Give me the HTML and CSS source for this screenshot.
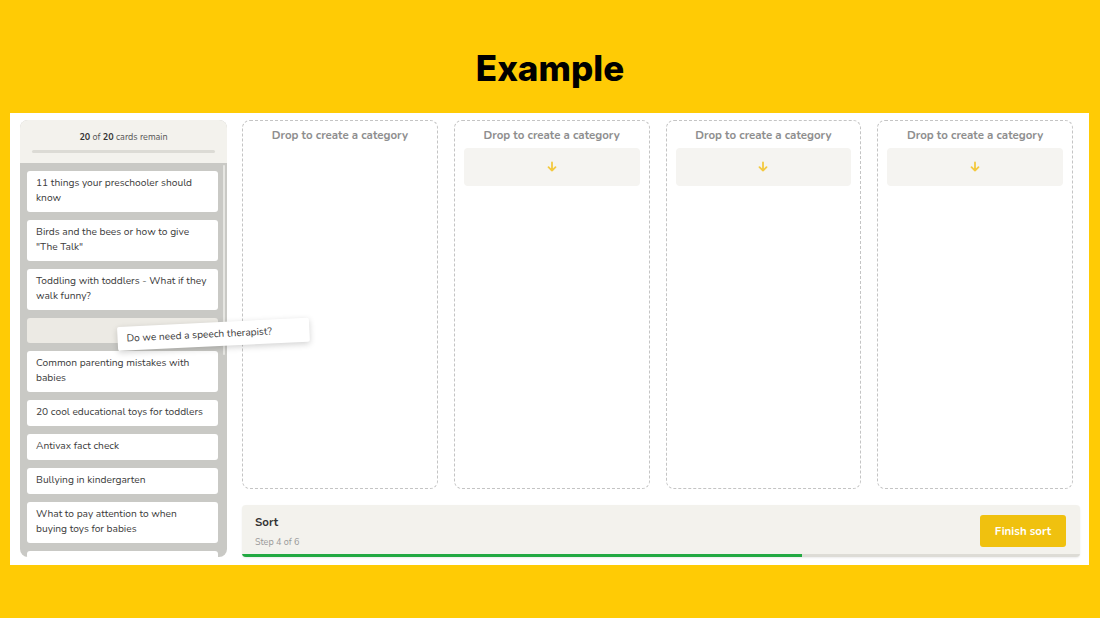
FILE: index.html
```html
<!DOCTYPE html>
<html lang="en">
<head>
    <meta charset="UTF-8">
    <meta name="viewport" content="width=device-width, initial-scale=1.0">
    <title>Card sort example</title>
    <link rel="stylesheet" href="styles.css">
</head>
<body>
    <h1 class="title">Example</h1>

    <div class="panel">
        <!-- Lista de cartões -->
        <div class="sidebar">
            <div class="remain">
                <p><strong>20</strong> of <strong>20</strong> cards remain</p>
                <div class="remain-bar"></div>
            </div>
            <div class="cards">
                <div class="card">11 things your preschooler should know</div>
                <div class="card">Birds and the bees or how to give "The Talk"</div>
                <div class="card">Toddling with toddlers - What if they walk funny?</div>
                <div class="card placeholder"></div>
                <div class="card">Common parenting mistakes with babies</div>
                <div class="card">20 cool educational toys for toddlers</div>
                <div class="card">Antivax fact check</div>
                <div class="card">Bullying in kindergarten</div>
                <div class="card">What to pay attention to when buying toys for babies</div>
                <div class="card empty"></div>
                <div class="scroll-thumb"></div>
            </div>
        </div>

        <div class="dragging">Do we need a speech therapist?</div>

        <!-- Categorias -->
        <div class="main">
            <div class="columns">
                <div class="column">
                    <h4>Drop to create a category</h4>
                </div>
                <div class="column">
                    <h4>Drop to create a category</h4>
                    <div class="dropzone">
                        <svg width="12" height="12" viewBox="0 0 12 12"><path d="M6 1.5v8M2.5 6.2L6 9.6l3.5-3.4" fill="none" stroke="#f3c93f" stroke-width="1.8" stroke-linecap="round" stroke-linejoin="round"/></svg>
                    </div>
                </div>
                <div class="column">
                    <h4>Drop to create a category</h4>
                    <div class="dropzone">
                        <svg width="12" height="12" viewBox="0 0 12 12"><path d="M6 1.5v8M2.5 6.2L6 9.6l3.5-3.4" fill="none" stroke="#f3c93f" stroke-width="1.8" stroke-linecap="round" stroke-linejoin="round"/></svg>
                    </div>
                </div>
                <div class="column">
                    <h4>Drop to create a category</h4>
                    <div class="dropzone">
                        <svg width="12" height="12" viewBox="0 0 12 12"><path d="M6 1.5v8M2.5 6.2L6 9.6l3.5-3.4" fill="none" stroke="#f3c93f" stroke-width="1.8" stroke-linecap="round" stroke-linejoin="round"/></svg>
                    </div>
                </div>
            </div>

            <div class="footer">
                <div class="step">
                    <h3>Sort</h3>
                    <p>Step 4 of 6</p>
                </div>
                <button class="finish">Finish sort</button>
                <div class="progress"><div class="progress-fill"></div></div>
            </div>
        </div>
    </div>
</body>
</html>
```

FILE: styles.css
```css
/* Geral */
body {
    margin: 0;
    background-color: #ffcb05;
    font-family: 'Nunito', 'Lato', sans-serif;
    height: 618px;
    overflow: hidden;
}

.title {
    margin: 0;
    height: 113px;
    display: flex;
    align-items: center;
    justify-content: center;
    padding-top: 22px;
    box-sizing: border-box;
    font-family: 'Inter', sans-serif;
    font-weight: 800;
    font-size: 35px;
    color: #000;
}

.panel {
    position: relative;
    margin: 0 11px 0 10px;
    height: 452px;
    background-color: #fff;
    padding: 7px 9px 8px 10px;
    box-sizing: border-box;
    display: flex;
    gap: 15px;
}

/* Barra lateral */
.sidebar {
    width: 207px;
    flex-shrink: 0;
    border-radius: 8px;
    overflow: hidden;
    display: flex;
    flex-direction: column;
    background-color: #c9c9c5;
}

.remain {
    background-color: #f3f2ed;
    height: 43px;
    padding: 11px 12px 0;
    box-sizing: border-box;
}

.remain p {
    margin: 0;
    font-size: 9px;
    color: #555;
    text-align: center;
}

.remain p strong {
    color: #333;
}

.remain-bar {
    height: 3px;
    background-color: #dcdbd5;
    margin-top: 7px;
    border-radius: 2px;
}

.cards {
    position: relative;
    flex: 1;
    overflow: hidden;
    padding: 8px 9px 0 7px;
    display: flex;
    flex-direction: column;
    gap: 8px;
}

.card {
    background-color: #fff;
    border-radius: 3px;
    padding: 5px 9px 6px;
    font-size: 10.2px;
    line-height: 15px;
    color: #3a3a3a;
    flex-shrink: 0;
}

.card.placeholder {
    background-color: #eceae4;
    height: 25px;
    padding: 0;
}

.card.empty {
    height: 30px;
    padding: 0;
}

.scroll-thumb {
    position: absolute;
    right: 2px;
    top: 2px;
    width: 2px;
    height: 190px;
    background-color: #e6e6e2;
    border-radius: 1px;
}

/* Cartão sendo arrastado */
.dragging {
    position: absolute;
    left: 107px;
    top: 214px;
    width: 192px;
    height: 24px;
    box-sizing: border-box;
    padding: 5px 9px;
    background-color: #fff;
    font-size: 10.2px;
    line-height: 14px;
    color: #3a3a3a;
    transform: rotate(-2.8deg);
    transform-origin: left top;
    box-shadow: 0 2px 6px rgba(0, 0, 0, 0.18);
    border-radius: 2px;
}

/* Área principal */
.main {
    flex: 1;
    display: flex;
    flex-direction: column;
    gap: 16px;
}

.columns {
    height: 369px;
    display: flex;
    gap: 16px;
    padding-right: 7px;
}

.column {
    flex: 1;
    border: 1px dashed #c4c4c4;
    border-radius: 8px;
    padding: 6px 9px;
}

.column h4 {
    margin: 0 0 5px;
    text-align: center;
    font-size: 11.5px;
    font-weight: 700;
    color: #8e8e8e;
}

.dropzone {
    height: 38px;
    background-color: #f5f4f1;
    border-radius: 4px;
    display: flex;
    align-items: center;
    justify-content: center;
}

/* Rodapé com etapa */
.footer {
    position: relative;
    height: 52px;
    background-color: #f3f2ed;
    border-radius: 4px;
    box-shadow: 0 1px 2px rgba(0, 0, 0, 0.08);
    display: flex;
    align-items: center;
    justify-content: space-between;
    padding: 0 14px 0 13px;
    box-sizing: border-box;
    overflow: hidden;
}

.step h3 {
    margin: 0 0 6px;
    font-size: 11.5px;
    font-weight: 700;
    color: #333;
}

.step p {
    margin: 0;
    font-size: 9px;
    color: #999;
}

.finish {
    width: 86px;
    height: 32px;
    border: none;
    border-radius: 3px;
    background-color: #f0c10f;
    color: #fff;
    font-family: inherit;
    font-weight: 700;
    font-size: 11.5px;
    cursor: pointer;
}

.progress {
    position: absolute;
    left: 0;
    right: 0;
    bottom: 0;
    height: 3px;
    background-color: #dddcd6;
}

.progress-fill {
    width: 66.8%;
    height: 100%;
    background-color: #22a942;
}
```
